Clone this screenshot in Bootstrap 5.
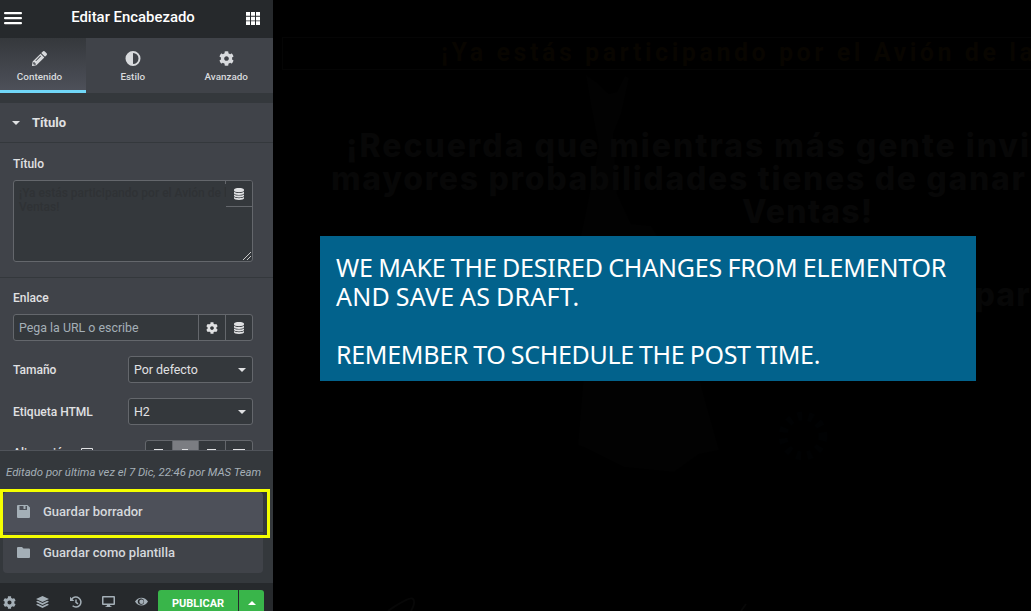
<!DOCTYPE html>
<html lang="es">
<head>
<meta charset="utf-8">
<title>Editar Encabezado</title>
<link href="https://cdn.jsdelivr.net/npm/bootstrap@5.3.0/dist/css/bootstrap.min.css" rel="stylesheet">
<style>
body{width:1031px;height:611px;overflow:hidden;background:#000;font-family:Roboto,"Liberation Sans",sans-serif;font-size:12px;line-height:16px;color:#e0e1e3}
svg{display:block;fill:currentColor}
svg.line{fill:none;stroke:currentColor}
.side-panel{width:273px;height:611px;background:#404349}
.panel-head{height:38px;background:#26292c;padding:0 13px 4px 4px;color:#fff}
.panel-head h1{font-size:14.9px;font-weight:500;line-height:20px}
.tabs-row{height:55px}
.tab-item{width:93.5px;font-size:9.9px;font-weight:500;line-height:12px;padding-top:13px;gap:5px;color:#d8dadd}
.tab-item.current{width:86px;padding-right:7px;background:linear-gradient(#35383c,#4d5059);border-bottom:3px solid #71d7f7}
.strip{height:10px;background:#34383c}
.section-title{height:40px;border-bottom:1px solid #34383c;padding:1px 0 0 12px;font-size:13px;font-weight:700;gap:12px}
.caret{width:0;height:0;border:4.5px solid transparent;border-top-color:currentColor;border-bottom:0}
.caret.up{border-top:0;border-bottom:4px solid currentColor;border-left-width:4px;border-right-width:4px}
.lbl{font-weight:500;font-size:12px}
.ctl{background:#34383c;border:1px solid #64676c;border-radius:3px}
.area{height:82px;padding:5px;color:#2f3235;font-size:12px;line-height:14px;font-weight:500;overflow:hidden}
.dyn{top:0;right:0;width:26px;height:26px;background:#34383c;border-bottom:1px solid #64676c;color:#e0e1e3}
.dyn::before{content:"";position:absolute;left:-1px;top:0;width:1px;height:3px;background:#64676c}
.grip{right:1px;bottom:1px;color:#c8c8c8}
.ctl-cell{width:27px;border-left:1px solid #64676c}
.pick{width:125px;height:27px;padding:0 6px 0 5px;font-size:12.4px}
.align-btn{width:27px;height:25px;padding-top:8px;border-right:1px solid #64676c}
.drawer{height:133px;background:#34383c;border-top:1px solid #50545a}
.edited{font-size:11.35px;font-style:italic;color:#a4afb7;height:41px;padding-left:6px;white-space:nowrap}
.menu-item{height:40px;padding:0 14px 1px;font-size:13px;font-weight:500;gap:13px;color:#d5d8dc;background:#404349}
.menu-item svg{color:#a4afb7}
.menu-item.hot{height:41px;background:#4d5059;border-bottom:1px solid #34383c;border-radius:4px 4px 0 0}
.menu-item.end{border-radius:0 0 4px 4px}
.marker{left:0;top:489px;width:270px;height:49px;border:3px solid #f4ff00}
.foot{height:28px;background:#26292c;color:#a4afb7}
.foot-ico{width:33px;padding-top:13px}
.save{height:28px;margin-top:7px;background:#39b54a;color:#fff;font-size:11px;font-weight:700;line-height:27px}
.stage{width:758px;height:611px;background:#000}
.scene{left:0;top:0;z-index:0}
.ribbon{margin:37px 0 0 9px;width:760px;height:33px;border:1px solid #050505;padding-left:158px;color:#080500;font-size:25px;font-weight:700;line-height:30px;letter-spacing:3.55px;white-space:nowrap}
.headline{font-family:Inter,sans-serif;font-size:32px;font-weight:800;line-height:33px;letter-spacing:1.2px;color:#070707;white-space:nowrap;margin-top:59px}
.note{left:47px;top:236px;width:656px;height:145px;background:#02628c;color:#fff;padding:17px 16px;font-family:"Noto Sans","Open Sans",sans-serif;font-size:25px;line-height:29px;letter-spacing:-.17px;word-spacing:-1px;white-space:nowrap;z-index:2}
</style>
</head>
<body>
<svg width="0" height="0" class="position-absolute">
<defs>
<symbol id="gear" viewBox="0 0 512 512"><path d="M487.400 315.700l-42.600-24.600c4.300-23.200 4.300-47 0-70.200l42.600-24.600c4.900-2.800 7.100-8.600 5.500-14-11.100-35.600-30-67.800-54.700-94.600-3.800-4.100-10-5.100-14.800-2.300L380.800 110c-17.900-15.400-38.500-27.300-60.800-35.100V25.800c0-5.600-3.900-10.500-9.400-11.700-36.700-8.200-74.300-7.800-109.200 0-5.500 1.200-9.400 6.100-9.400 11.700V75c-22.200 7.900-42.800 19.800-60.800 35.100L88.700 85.500c-4.900-2.800-11-1.900-14.800 2.300-24.700 26.700-43.600 58.900-54.700 94.600-1.700 5.400.6 11.200 5.500 14L67.300 221c-4.300 23.200-4.300 47 0 70.200l-42.600 24.600c-4.900 2.800-7.100 8.600-5.500 14 11.100 35.600 30 67.800 54.700 94.600 3.800 4.100 10 5.100 14.800 2.300l42.600-24.600c17.900 15.400 38.500 27.300 60.800 35.100v49.200c0 5.600 3.900 10.500 9.400 11.700 36.700 8.200 74.300 7.800 109.200 0 5.500-1.200 9.400-6.100 9.400-11.700v-49.200c22.200-7.900 42.800-19.800 60.800-35.100l42.600 24.600c4.900 2.800 11 1.900 14.800-2.300 24.700-26.700 43.600-58.900 54.700-94.600 1.500-5.500-.7-11.300-5.600-14.100zM256 336c-44.100 0-80-35.900-80-80s35.900-80 80-80 80 35.900 80 80-35.900 80-80 80z"/></symbol>
<symbol id="db" viewBox="0 0 10 12"><path d="M0 1.700C0 .7 2.200 0 5 0s5 .7 5 1.700v.9c0 1-2.200 1.700-5 1.700S0 3.600 0 2.600zM0 3.800c1 .8 3 1.200 5 1.200s4-.4 5-1.200v1.400c0 1-2.200 1.700-5 1.700S0 6.200 0 5.200zM0 6.400c1 .8 3 1.200 5 1.200s4-.4 5-1.200v1.400c0 1-2.200 1.700-5 1.700S0 8.800 0 7.800zM0 9c1 .8 3 1.200 5 1.200s4-.4 5-1.200v1.200c0 1-2.200 1.700-5 1.700S0 11.200 0 10.200z"/></symbol>
</defs>
</svg>
<div class="d-flex position-relative">
<aside class="side-panel d-flex flex-column flex-shrink-0">
  <header class="panel-head d-flex align-items-center justify-content-between flex-shrink-0">
    <svg width="18" height="13" viewBox="0 0 18 13" style="margin-top:3px"><rect y="0" width="18" height="2.300" rx="1"/><rect y="5" width="18" height="2.300" rx="1"/><rect y="10" width="18" height="2.300" rx="1"/></svg>
    <h1 class="m-0" style="padding-right:2px">Editar Encabezado</h1>
    <svg width="14" height="13" viewBox="0 0 14 13" style="margin-top:2px"><path d="M0 0h4v3.700H0zM5 0h4v3.700H5zM10 0h4v3.700h-4zM0 4.700h4v3.700H0zM5 4.700h4v3.700H5zM10 4.700h4v3.700h-4zM0 9.300h4V13H0zM5 9.300h4V13H5zM10 9.300h4V13h-4z"/></svg>
  </header>
  <nav class="tabs-row d-flex flex-shrink-0">
    <div class="tab-item current d-flex flex-column align-items-center"><svg width="15" height="15" viewBox="0 0 512 512"><path d="M498 142l-46 46c-5 5-13 5-17 0L324 77c-5-5-5-12 0-17l46-46c19-19 49-19 68 0l60 60c19 19 19 49 0 68zm-214-42L22 362 0 484c-3 16 12 30 28 28l122-22 262-262c5-5 5-13 0-17L301 100c-4-5-12-5-17 0zM124 340c-5-6-5-14 0-20l154-154c6-5 14-5 20 0s5 14 0 20L144 340c-6 5-14 5-20 0zm-36 84h48v36l-64 12-32-32 12-64h36v48z"/></svg><span>Contenido</span></div>
    <div class="tab-item d-flex flex-column align-items-center"><svg width="16" height="15" viewBox="0 0 16 15"><path fill-rule="evenodd" d="M8 0a7.500 7.500 0 1 1 0 15A7.500 7.500 0 0 1 8 0zm0 2v11A5.500 5.500 0 0 0 8 2z"/></svg><span>Estilo</span></div>
    <div class="tab-item d-flex flex-column align-items-center"><svg width="15" height="15"><use href="#gear"/></svg><span>Avanzado</span></div>
  </nav>
  <div class="strip flex-shrink-0"></div>
  <div class="flex-grow-1 overflow-hidden" style="min-height:0">
    <div class="section-title d-flex align-items-center"><span class="caret"></span><span>Título</span></div>
    <div style="padding:13px 20px 15px 13px;border-bottom:1px solid #34383c">
      <div class="lbl" style="margin-bottom:8px">Título</div>
      <div class="ctl area position-relative">¡Ya estás participando por el Avión de l<br>Ventas!
        <div class="dyn position-absolute d-flex align-items-center justify-content-center"><svg width="10" height="12"><use href="#db"/></svg></div>
        <svg class="grip line position-absolute" width="8" height="8" viewBox="0 0 8 8"><path d="M0 8L8 0M4 8l4-4"/></svg>
      </div>
    </div>
    <div style="padding:12px 20px 0 13px">
      <div class="lbl" style="margin-bottom:8px">Enlace</div>
      <div class="ctl d-flex align-items-stretch" style="height:27px">
        <div class="flex-grow-1 d-flex align-items-center" style="padding-left:5px;color:#a4afb7;font-size:12.4px">Pega la URL o escribe</div>
        <div class="ctl-cell d-flex align-items-center justify-content-center"><svg width="12" height="12"><use href="#gear"/></svg></div>
        <div class="ctl-cell d-flex align-items-center justify-content-center"><svg width="10" height="12"><use href="#db"/></svg></div>
      </div>
      <div class="d-flex justify-content-between align-items-center" style="margin-top:15px"><span class="lbl">Tamaño</span><div class="ctl pick d-flex align-items-center justify-content-between"><span>Por defecto</span><span class="caret"></span></div></div>
      <div class="d-flex justify-content-between align-items-center" style="margin-top:15px"><span class="lbl">Etiqueta HTML</span><div class="ctl pick d-flex align-items-center justify-content-between"><span>H2</span><span class="caret"></span></div></div>
      <div class="d-flex justify-content-between" style="margin-top:15px">
        <div class="d-flex" style="padding-top:5px;gap:12px"><span class="lbl">Alineación</span><svg class="line" width="12" height="10" viewBox="0 0 12 10" style="margin-top:3px"><path d="M.5.500h11v7H.5z"/></svg></div>
        <div class="ctl d-flex overflow-hidden" style="width:108px;height:27px">
          <div class="align-btn d-flex justify-content-center"><svg width="9" height="8"><path d="M0 0h9v2H0z"/></svg></div>
          <div class="align-btn d-flex justify-content-center" style="background:#7b7d82"><svg width="6" height="8"><path d="M0 0h6v2H0z"/></svg></div>
          <div class="align-btn d-flex justify-content-center"><svg width="9" height="8"><path d="M0 0h9v2H0z"/></svg></div>
          <div class="align-btn d-flex justify-content-center border-0"><svg width="12" height="8"><path d="M0 0h12v2H0z"/></svg></div>
        </div>
      </div>
    </div>
  </div>
  <div class="drawer flex-shrink-0">
    <div class="edited d-flex align-items-center">Editado por última vez el 7 Dic, 22:46 por MAS Team</div>
    <div style="margin:0 10px 0 3px">
      <div class="menu-item hot d-flex align-items-center"><svg width="13" height="13" viewBox="0 0 13 13"><path fill-rule="evenodd" d="M1 0h9.500L13 2.500V12a1 1 0 0 1-1 1H1a1 1 0 0 1-1-1V1a1 1 0 0 1 1-1zm1.500 1v4h7.500V1H8.500v3h-2V1z"/></svg><span>Guardar borrador</span></div>
      <div class="menu-item end d-flex align-items-center"><svg width="13" height="11" viewBox="0 0 13 11"><path d="M1 0h4l1.500 1.600H12a1 1 0 0 1 1 1V10a1 1 0 0 1-1 1H1a1 1 0 0 1-1-1V1a1 1 0 0 1 1-1z"/></svg><span>Guardar como plantilla</span></div>
    </div>
  </div>
  <footer class="foot d-flex flex-shrink-0 overflow-hidden">
    <div class="foot-ico" style="padding-left:3px"><svg width="13" height="13"><use href="#gear"/></svg></div>
    <div class="foot-ico" style="padding-left:3px"><svg width="13" height="12" viewBox="0 0 13 12"><path d="M6.500 0L13 3 6.500 6 0 3zM1.700 4.800l4.800 2.100 4.800-2.100L13 5.800 6.500 8.900 0 5.800zM1.700 7.800l4.800 2.100 4.800-2.100L13 8.800l-6.500 3.100L0 8.800z"/></svg></div>
    <div class="foot-ico" style="padding-left:4px"><svg width="12" height="12" viewBox="0 0 12 12"><path d="M1.800 3.200A5 5 0 1 1 2.600 9.800M6 3.500v2.800l2 1.500" fill="none" stroke="currentColor" stroke-width="1.500"/><path d="M0 .8v4.200h4.300z"/></svg></div>
    <div class="foot-ico" style="padding-left:3px"><svg width="13" height="12" viewBox="0 0 13 12"><path fill-rule="evenodd" d="M1 0h11a1 1 0 0 1 1 1v7a1 1 0 0 1-1 1H8l.4 1.300H9.500V11h-6v-.7h1.100L5 9H1a1 1 0 0 1-1-1V1a1 1 0 0 1 1-1zm.5 1.500v6h10v-6z"/></svg></div>
    <div class="foot-ico" style="width:26px;padding-left:3px"><svg width="13" height="12" viewBox="0 0 13 12"><path fill-rule="evenodd" d="M0 5.500C1.500 3 3.800 1.700 6.500 1.700S11.500 3 13 5.500C11.500 8.200 9.200 9.500 6.500 9.500S1.500 8.200 0 5.500zm6.500-3a3.200 3.200 0 1 0 0 6.300 3.200 3.200 0 0 0 0-6.300z"/><circle cx="6.500" cy="5.700" r="2.200"/></svg></div>
    <div class="save text-center" style="width:80px;border-radius:3px 0 0 0">PUBLICAR</div>
    <div class="save d-flex justify-content-center align-items-center" style="width:25px;margin-left:1px;border-radius:0 3px 0 0;padding-bottom:2px"><span class="caret up"></span></div>
  </footer>
</aside>
<main class="stage position-relative overflow-hidden d-flex flex-column">
  <svg class="scene position-absolute" width="758" height="611" viewBox="0 0 758 611">
    <path fill="#020202" d="M313 75l10 7 13 12 8-2 8-16 4 2-8 36-8 20 4 60 14 30 20 2 30 50 20 110 18 64-20 4-25 18-50-5-40-20-6-2 5-60 4-60-10-70 12-58 10-50-8-42z"/>
    <path d="M115 611q22-15 25-12t-2 12M468 611l5-7" fill="none" stroke="#070707" stroke-width="2"/>
    <circle cx="530" cy="436" r="20" fill="none" stroke="#010203" stroke-width="9" stroke-dasharray="5 6"/>
  </svg>
  <div class="ribbon position-relative flex-shrink-0">¡Ya estás participando por el Avión de la</div>
  <div class="headline position-relative">
    <div style="padding-left:73px;letter-spacing:1.95px">¡Recuerda que mientras más gente invi</div>
    <div style="padding-left:58px;letter-spacing:1.67px">mayores probabilidades tienes de ganar</div>
    <div style="padding-left:469px">Ventas!</div>
    <div class="text-end" style="margin-top:50px">Comienza a compar</div>
  </div>
  <div class="note position-absolute">
    <div>WE MAKE THE DESIRED CHANGES FROM ELEMENTOR</div>
    <div style="letter-spacing:.25px">AND SAVE AS DRAFT.</div>
    <div>&nbsp;</div>
    <div style="letter-spacing:-.3px">REMEMBER TO SCHEDULE THE POST TIME.</div>
  </div>
</main>
<div class="marker position-absolute"></div>
</div>
<script src="https://cdn.jsdelivr.net/npm/bootstrap@5.3.0/dist/js/bootstrap.bundle.min.js"></script>
</body>
</html>
